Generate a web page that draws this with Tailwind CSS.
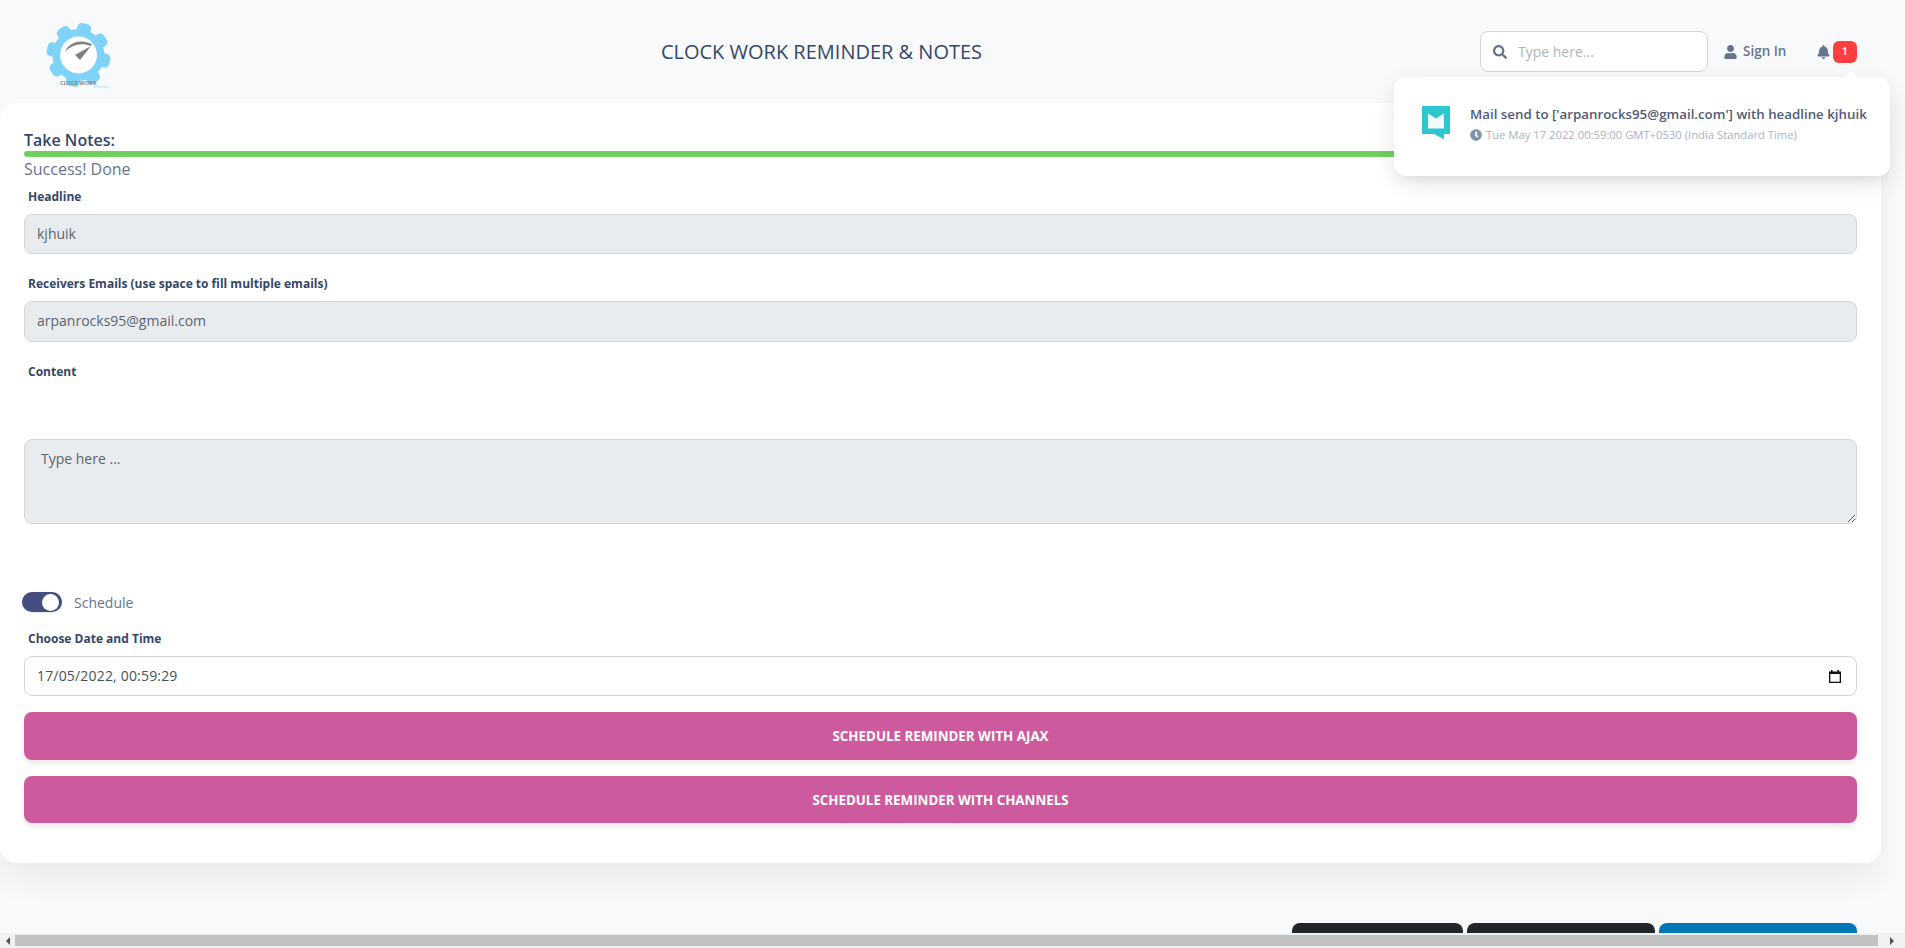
<!DOCTYPE html>
<html lang="en">
<head>
    <meta charset="UTF-8">
    <title>Clock Work Reminder & Notes</title>
    <script src="https://cdn.jsdelivr.net/npm/@tailwindcss/browser@4"></script>
</head>
<body class="relative h-screen overflow-hidden bg-[#f8f9fa] text-[#67748e] font-['Open_Sans',sans-serif]">

    <!-- navbar -->
    <nav class="relative flex items-center h-[103px] pl-[46px] pr-[48px]">
        <div class="relative w-[66px] h-[76px] mt-[2px]">
            <svg class="w-[66px] h-[66px] mt-[8px]" viewBox="0 0 66 66">
                <g transform="rotate(12 32.500 32)" fill="#7ed3f7">
                    <rect x="25.500" y="0" width="14" height="64" rx="4.500"></rect>
                    <rect x="25.500" y="0" width="14" height="64" rx="4.500" transform="rotate(45 32.500 32)"></rect>
                    <rect x="25.500" y="0" width="14" height="64" rx="4.500" transform="rotate(90 32.500 32)"></rect>
                    <rect x="25.500" y="0" width="14" height="64" rx="4.500" transform="rotate(135 32.500 32)"></rect>
                </g>
                <circle cx="32.500" cy="32" r="26" fill="#7ed3f7"></circle>
                <circle cx="32.500" cy="32" r="18.500" fill="#fff"></circle>
                <path d="M19 29 C22 20 34 15 46 21 L45 23 C35 19 25 22 19 29Z" fill="#808080"></path>
                <path d="M29 32 L45 23 L34 37Z" fill="#808080"></path>
            </svg>
            <span class="absolute left-[14px] top-[64px] text-[5.500px] leading-[8px] font-bold text-[#888] whitespace-nowrap">CLOCK WORK</span>
            <span class="absolute left-[47px] top-[69px] text-[3.500px] leading-[5px] text-[#9fdcf7] whitespace-nowrap">Reminder</span>
        </div>
        <div class="flex-1 text-center text-[20px] text-[#344767] pl-[51px] mt-[1px]">CLOCK WORK REMINDER &amp; NOTES</div>
        <div class="flex items-center">
            <div class="flex items-center w-[228px] h-[41px] bg-white border border-[#d2d6da] rounded-lg pl-3">
                <svg class="w-[14px] h-[14px] text-[#67748e]" viewBox="0 0 512 512" fill="currentColor"><path d="M505 442.700L405.300 343c-4.500-4.500-10.600-7-17-7H372c27.600-35.300 44-79.700 44-128C416 93.100 322.900 0 208 0S0 93.100 0 208s93.100 208 208 208c48.300 0 92.700-16.400 128-44v16.300c0 6.400 2.500 12.500 7 17l99.700 99.700c9.400 9.400 24.600 9.400 33.900 0l28.300-28.300c9.400-9.400 9.400-24.600.1-34zM208 336c-70.700 0-128-57.200-128-128 0-70.700 57.200-128 128-128 70.700 0 128 57.200 128 128 0 70.700-57.200 128-128 128z"></path></svg>
                <span class="ml-[11px] text-sm text-[#adb5bd]">Type here...</span>
            </div>
            <div class="flex items-center ml-4 w-[80px]">
                <svg class="w-[13px] h-[14px]" viewBox="0 0 448 512" fill="#67748e"><path d="M224 256c70.700 0 128-57.300 128-128S294.700 0 224 0 96 57.300 96 128s57.300 128 128 128zm89.600 32h-16.700c-22.200 10.200-46.900 16-72.900 16s-50.600-5.800-72.900-16h-16.700C60.200 288 0 348.200 0 422.400V464c0 26.500 21.500 48 48 48h352c26.500 0 48-21.500 48-48v-41.600c0-74.200-60.200-134.400-134.400-134.400z"></path></svg>
                <span class="ml-[6px] text-[13.500px] font-semibold text-[#67748e]">Sign In</span>
            </div>
            <div class="flex items-center ml-[13px]">
                <svg class="w-[13px] h-[14px]" viewBox="0 0 448 512" fill="#67748e"><path d="M224 512c35.300 0 64-28.700 64-64H160c0 35.300 28.700 64 64 64zm215.400-149.700c-19.300-20.800-55.500-52-55.500-154.300 0-77.700-54.500-139.900-127.900-155.200V32c0-17.700-14.300-32-32-32s-32 14.300-32 32v20.800C118.600 68.100 64.100 130.300 64.100 208c0 102.300-36.200 133.500-55.500 154.300-6 6.400-8.700 14.100-8.600 21.700.1 16.400 13 32 32.100 32h383.800c19.100 0 32-15.600 32.100-32 .1-7.600-2.600-15.300-8.600-21.700z"></path></svg>
                <span class="flex items-center justify-center w-6 h-[22px] ml-[3px] bg-[#fd3f3f] rounded-md text-[11px] font-semibold text-white">1</span>
            </div>
        </div>
    </nav>

    <!-- notification dropdown -->
    <div class="absolute left-[1394px] top-[77px] w-[496px] h-[99px] bg-white rounded-xl shadow-[0_8px_26px_-4px_rgba(20,20,20,0.15),0_8px_9px_-5px_rgba(20,20,20,0.06)] z-10 flex pl-7 pt-[28px]">
        <div class="absolute -top-[6px] left-[450px] w-0 h-0 border-l-[7px] border-r-[7px] border-b-[6px] border-l-transparent border-r-transparent border-b-white"></div>
        <svg class="w-[29px] h-[34px] mt-[1px]" viewBox="0 0 29 34">
            <path d="M0 0H28V28H22V33.500L12 28H0Z" fill="#2cc7cf"></path>
            <path d="M6 7.500L14 12.500L22 7.500V22.500H6Z" fill="#f3fbfc"></path>
        </svg>
        <div class="ml-[19px]">
            <div class="text-[13.300px] leading-[20px] font-semibold text-[#4f5b78] whitespace-nowrap -mt-[1px]">Mail send to ['arpanrocks95@gmail.com'] with headline kjhuik</div>
            <div class="flex items-center mt-[3px] text-[11.250px] leading-[16px] text-[#a9b2c4] whitespace-nowrap">
                <svg class="w-3 h-3 mr-[4px]" viewBox="0 0 512 512" fill="#8392ab"><path d="M256 8C119 8 8 119 8 256s111 248 248 248 248-111 248-248S393 8 256 8zm57.100 350.100L224.900 294c-3.100-2.300-4.900-5.900-4.900-9.700V116c0-6.600 5.400-12 12-12h48c6.600 0 12 5.400 12 12v137.700l63.500 46.200c5.400 3.900 6.500 11.400 2.600 16.800l-28.200 38.800c-3.900 5.300-11.400 6.500-16.800 2.600z"></path></svg>
                Tue May 17 2022 00:59:00 GMT+0530 (India Standard Time)
            </div>
        </div>
    </div>

    <!-- form card -->
    <main class="w-[1881px] h-[760px] bg-white rounded-2xl shadow-[0_20px_27px_0_rgba(0,0,0,0.05)] px-6 pt-[25px]">
        <h6 class="text-base leading-[24px] font-semibold text-[#344767]">Take Notes:</h6>
        <div class="h-[6px] -mt-px bg-[#6fcf5f] rounded-sm"></div>
        <p class="text-base leading-[24px]">Success! Done</p>

        <label class="block text-xs leading-[18px] font-bold text-[#344767] ml-1 mt-[7px]">Headline</label>
        <input type="text" disabled value="kjhuik" class="block w-full h-10 mt-[8px] px-3 pb-[2px] text-sm text-[#5b6470] bg-[#e9ecef] border border-[#d2d6da] rounded-lg">

        <label class="block text-xs leading-[18px] font-bold text-[#344767] ml-1 mt-[21px]">Receivers Emails (use space to fill multiple emails)</label>
        <input type="text" disabled value="arpanrocks95@gmail.com" class="block w-full h-[41px] mt-[8px] px-3 pb-[3px] text-sm text-[#5b6470] bg-[#e9ecef] border border-[#d2d6da] rounded-lg">

        <label class="block text-xs leading-[18px] font-bold text-[#344767] ml-1 mt-[21px]">Content</label>
        <textarea disabled placeholder="Type here ..." class="block w-full h-[85px] mt-[58px] px-4 pt-[9px] pb-[6px] text-sm placeholder:text-[#5b6470] bg-[#e9ecef] border border-[#d2d6da] rounded-lg"></textarea>

        <div class="flex items-center -ml-[2px] mt-[68px] h-[20px]">
            <span class="flex items-center justify-end w-[40px] h-[20px] pr-[3px] bg-[#434d7e] rounded-full shadow-sm">
                <span class="w-[17px] h-[17px] bg-white rounded-full"></span>
            </span>
            <span class="ml-3 pt-[2px] text-sm">Schedule</span>
        </div>

        <label class="block text-xs leading-[18px] font-bold text-[#344767] ml-1 mt-[18px]">Choose Date and Time</label>
        <div class="flex items-center justify-between h-10 mt-[8px] pl-3 pr-[15px] bg-white border border-[#d2d6da] rounded-lg">
            <span class="text-sm tracking-[0.18px] text-[#495057]">17/05/2022, 00:59:29</span>
            <svg class="w-3 h-[13px]" viewBox="0 0 12 13"><path d="M2 0H3.500V1.500H8.500V0H10V1.500H12V13H0V1.500H2Z" fill="#111"></path><rect x="1.300" y="4" width="9.400" height="7.700" fill="#fff"></rect></svg>
        </div>

        <button class="block w-full h-[48px] mt-4 pt-[2px] bg-[#cd5a9d] rounded-lg text-[13.330px] font-bold text-white shadow-[0_4px_7px_-1px_rgba(0,0,0,0.11)]">SCHEDULE REMINDER WITH AJAX</button>
        <button class="block w-full h-[47px] mt-4 pt-[2px] bg-[#cd5a9d] rounded-lg text-[13.330px] font-bold text-white shadow-[0_4px_7px_-1px_rgba(0,0,0,0.11)]">SCHEDULE REMINDER WITH CHANNELS</button>
    </main>

    <!-- buttons below the card, cut off by the fold -->
    <div class="flex justify-end gap-[4px] w-[1857px] mt-[60px]">
        <div class="w-[171px] h-10 bg-[#212529] rounded-lg"></div>
        <div class="w-[188px] h-10 bg-[#212529] rounded-lg"></div>
        <div class="w-[198px] h-10 bg-[#0077b5] rounded-lg"></div>
    </div>

    <!-- horizontal scrollbar -->
    <div class="absolute bottom-0 left-0 right-0 h-[15px] flex items-center bg-[#f1f1f1]">
        <span class="w-[15px] flex justify-center"><span class="w-0 h-0 border-y-[4px] border-r-[4px] border-y-transparent border-r-[#505050]"></span></span>
        <span class="w-[1863px] h-[11px] bg-[#c1c1c1]"></span>
        <span class="flex-1 flex justify-center"><span class="w-0 h-0 border-y-[4px] border-l-[4px] border-y-transparent border-l-[#505050]"></span></span>
    </div>
</body>
</html>
